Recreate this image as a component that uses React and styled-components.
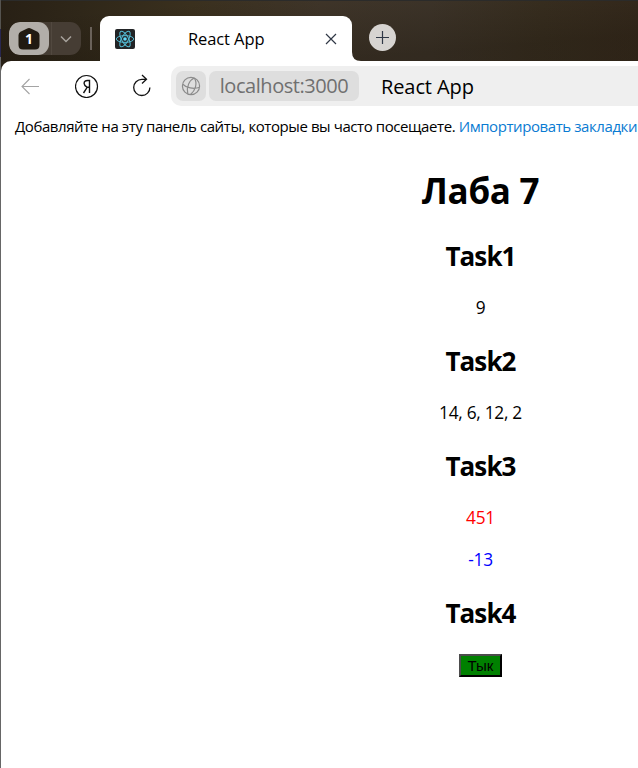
import React from "react";
import styled, { createGlobalStyle } from "styled-components";

const GlobalStyle = createGlobalStyle`
  *, *::before, *::after { box-sizing: border-box; }
  html, body { margin: 0; padding: 0; background: #fff; overflow: hidden; }
  body { font-family: "Open Sans", "Noto Sans", sans-serif; font-weight: 400; color: #000; }
`;

const Desktop = styled.div`
  width: 638px;
  height: 768px;
  padding-left: 1px;
  overflow: hidden;
  background: linear-gradient(#55534f 0 29px, #28264f 29px 57px, #666 57px);
`;

const Window = styled.div`
  width: 637px;
  height: 768px;
  display: flex;
  flex-direction: column;
  overflow: hidden;
  background: linear-gradient(#2b2b2a 0 1px, transparent 1px),
    linear-gradient(175deg, rgba(20, 14, 6, 0) 20px, rgba(20, 14, 6, 0.3) 90px) 0 0 / 100% 61px no-repeat,
    linear-gradient(90deg, #282015 0, #2f2719 80px, #3a301e 190px, #40362a 320px, #3f362b 430px, #3b3122 540px, #392d1f 637px);
`;

const TabStrip = styled.header`
  height: 61px;
  flex: none;
  display: flex;
  align-items: flex-start;
  padding-left: 8px;
`;

const TabGroup = styled.div`
  display: flex;
  width: 72px;
  height: 33px;
  margin-top: 22px;
  border-radius: 11px;
  background: #463d34;
  overflow: hidden;
`;

const GroupCount = styled.div`
  width: 40px;
  height: 33px;
  border-radius: 11px;
  background: #b2aea9;
  display: grid;
  place-items: center;
`;

const CountBadge = styled.div`
  display: grid;
  width: 22px;
  height: 24px;
  margin-top: 1px;
  > * { grid-area: 1 / 1; }
`;

const CountLabel = styled.span`
  color: #fff;
  font-size: 14px;
  font-weight: 700;
  line-height: 23px;
  text-align: center;
`;

const GroupToggle = styled.div`
  flex: 1;
  margin-left: 2px;
  border-left: 1px solid #51483f;
  display: grid;
  place-items: center;
  padding-right: 1px;
`;

const Divider = styled.div`
  width: 2px;
  height: 23px;
  margin: 27px 8px 0 9px;
  background: #6a625a;
`;

const Tab = styled.div`
  width: 252px;
  height: 45px;
  margin-top: 16px;
  padding: 0 15px;
  display: flex;
  align-items: center;
  border-radius: 9px 9px 0 0;
  background: #fff;
`;

const TabTitle = styled.span`
  margin: 1px auto 0 53px;
  font-size: 16.5px;
  line-height: 24px;
  letter-spacing: -0.1px;
`;

const TabFoot = styled.svg`
  align-self: flex-end;
  display: block;
  flex: none;
`;

const NewTab = styled.div`
  width: 27px;
  height: 27px;
  margin: 24px 0 0 8px;
  border-radius: 50%;
  background: #d7d4d1;
  display: grid;
  place-items: center;
`;

const BrowserBody = styled.div`
  flex: 1;
  min-height: 0;
  background: #fff;
  border-radius: 10px 0 0 0;
`;

const Toolbar = styled.nav`
  height: 50px;
  display: flex;
  align-items: center;
  padding-left: 18px;
`;

const NavIcon = styled.svg`
  display: block;
  flex: none;
  margin-right: ${(p) => p.$gap};
`;

const AddressBar = styled.div`
  flex: 1;
  height: 40px;
  padding-left: 5px;
  display: flex;
  align-items: center;
  gap: 3px;
  background: #efefef;
  border-radius: 10px 0 0 10px;
`;

const Chip = styled.div`
  width: ${(p) => p.$width};
  height: 30px;
  flex: none;
  display: flex;
  align-items: center;
  justify-content: center;
  border-radius: 7px;
  background: #dedede;
  color: #707070;
  font-size: 20px;
  line-height: 32px;
  letter-spacing: -0.45px;
  white-space: nowrap;
`;

const PageName = styled.span`
  margin: 2px 0 0 19px;
  font-size: 20px;
  line-height: 30px;
  letter-spacing: -0.1px;
`;

const BookmarkHint = styled.div`
  padding: 3px 0 0 14px;
  height: 33px;
  font-size: 15px;
  line-height: 24px;
  letter-spacing: -0.42px;
  white-space: nowrap;
`;

const BookmarkLink = styled.a`
  color: #0a7bd2;
`;

const Page = styled.main`
  width: 959px;
  text-align: center;
  display: flex;
  flex-direction: column;
  align-items: center;
  padding-top: 23px;
`;

const Title = styled.h1`
  margin: 0 0 23px;
  font-size: 35px;
  line-height: 48px;
  font-weight: 700;
  letter-spacing: -0.3px;
`;

const Task = styled.section`
  display: flex;
  flex-direction: column;
  align-items: center;
  margin-bottom: 23px;
`;

const TaskTitle = styled.h2`
  margin: 0 0 22px;
  font-size: 26px;
  line-height: 36px;
  font-weight: 700;
  letter-spacing: -0.9px;
`;

const Result = styled.p`
  margin: 0;
  font-size: 17.3px;
  line-height: 24px;
  letter-spacing: -0.28px;
  color: ${(p) => p.$color || "#000"};
  & + & { margin-top: 18px; }
`;

const ClickButton = styled.button`
  width: 43px;
  height: 23px;
  margin-top: 1px;
  padding: 0;
  border: 2px solid;
  border-color: #4c4c4c #000 #000 #4c4c4c;
  border-radius: 0;
  background: #008000;
  color: #000;
  font: 15px/19px "Liberation Sans", Arial, sans-serif;
`;

const ReactLogo = () => (
  <svg width="20" height="20" viewBox="0 0 20 20">
    <rect width="20" height="20" rx="2" fill="#222426" />
    <g fill="none" stroke="#53b9d1" strokeWidth="1">
      <ellipse cx="10" cy="10" rx="8.7" ry="3.4" />
      <ellipse cx="10" cy="10" rx="8.7" ry="3.4" transform="rotate(60 10 10)" />
      <ellipse cx="10" cy="10" rx="8.7" ry="3.4" transform="rotate(120 10 10)" />
    </g>
    <circle cx="10" cy="10" r="1.8" fill="#61dafb" />
  </svg>
);

const tasks = [
  { title: "Task1", results: [{ text: "9" }] },
  { title: "Task2", results: [{ text: "14, 6, 12, 2" }] },
  { title: "Task3", results: [{ text: "451", color: "#f00" }, { text: "-13", color: "#00f" }] },
];

export default function App() {
  return (
    <>
      <GlobalStyle />
      <Desktop>
        <Window>
          <TabStrip>
            <TabGroup>
              <GroupCount>
                <CountBadge>
                  <svg width="22" height="24" viewBox="0 0 22 24">
                    <path d="M9.2 1.4Q11 .5 12.8 1.4L19.5 4.8Q21.5 6 21.5 8V18Q21.5 22.5 17 22.5H5Q.5 22.5.5 18V8Q.5 6 2.5 4.8Z" fill="#211a11" />
                  </svg>
                  <CountLabel>1</CountLabel>
                </CountBadge>
              </GroupCount>
              <GroupToggle>
                <svg width="12" height="8" viewBox="0 0 12 8" fill="none" stroke="#a8a39d" strokeWidth="1.5">
                  <path d="M1 1.5 6 6.5 11 1.5" />
                </svg>
              </GroupToggle>
            </TabGroup>
            <Divider />
            <Tab>
              <ReactLogo />
              <TabTitle>React App</TabTitle>
              <svg width="12" height="12" viewBox="0 0 12 12" stroke="#303846" strokeWidth="1.2">
                <path d="M1 1 11 11M11 1 1 11" />
              </svg>
            </Tab>
            <TabFoot width="9" height="9" viewBox="0 0 9 9">
              <path d="M0 0Q0 9 9 9H0Z" fill="#fff" />
            </TabFoot>
            <NewTab>
              <svg width="13" height="13" viewBox="0 0 13 13" stroke="#303846" strokeWidth="1.2">
                <path d="M6.5 0V13M0 6.5H13" />
              </svg>
            </NewTab>
          </TabStrip>
          <BrowserBody>
            <Toolbar>
              <NavIcon $gap="34px" width="22" height="18" viewBox="0 0 22 18" fill="none" stroke="#a4a4a4" strokeWidth="1.1">
                <path d="M20 9.5H3M10.5 2 3 9.5 10.5 17" />
              </NavIcon>
              <NavIcon $gap="34px" width="24" height="24" viewBox="0 0 24 24" fill="none" stroke="#111" strokeWidth="1.2">
                <circle cx="11.5" cy="12.5" r="11" />
                <path d="M14.5 19V6.5H12.6C10.3 6.5 9.1 7.7 9.1 9.4C9.1 11 10 11.8 12.2 13.3L8.5 19M12.2 13.3H14.5" strokeWidth="1.4" />
              </NavIcon>
              <NavIcon $gap="18px" width="20" height="24" viewBox="0 0 20 24" fill="none" stroke="#111" strokeWidth="1.3">
                <path d="M13.5 5.3H8.8A8.1 8.1 0 1 0 16.9 13.4M9 1 13.5 5.3 9 9.5" />
              </NavIcon>
              <AddressBar>
                <Chip $width="30px">
                  <svg width="20" height="20" viewBox="0 0 20 20" fill="none" stroke="#8b8b8b" strokeWidth="1.2">
                    <circle cx="10" cy="10" r="8.6" />
                    <path d="M13.2 2C8.5 4 5 11 6.8 18M13.2 2C16.8 7 14.5 14.5 9.5 18.5M1.8 8.2C5 12 13 13.2 18.2 11.5" />
                  </svg>
                </Chip>
                <Chip $width="150px">localhost:3000</Chip>
                <PageName>React App</PageName>
              </AddressBar>
            </Toolbar>
            <BookmarkHint>
              Добавляйте на эту панель сайты, которые вы часто посещаете.{" "}
              <BookmarkLink>Импортировать закладки</BookmarkLink>
            </BookmarkHint>
            <Page>
              <Title>Лаба 7</Title>
              {tasks.map((task) => (
                <Task key={task.title}>
                  <TaskTitle>{task.title}</TaskTitle>
                  {task.results.map((r) => (
                    <Result key={r.text} $color={r.color}>{r.text}</Result>
                  ))}
                </Task>
              ))}
              <Task>
                <TaskTitle>Task4</TaskTitle>
                <ClickButton>Тык</ClickButton>
              </Task>
            </Page>
          </BrowserBody>
        </Window>
      </Desktop>
    </>
  );
}
